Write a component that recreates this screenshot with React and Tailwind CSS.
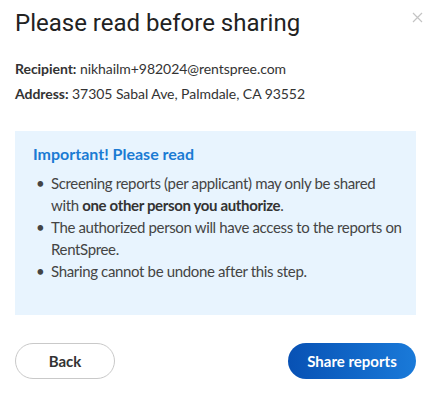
import React from 'react';

const bullets = [
  <>
    Screening reports (per applicant) may only be shared
    <br />
    with <b className="font-bold text-[#333]">one other person you authorize</b>.
  </>,
  <>The authorized person will have access to the reports on RentSpree.</>,
  <>Sharing cannot be undone after this step.</>
];

const CloseIcon = () => (
  <svg width="11" height="11" viewBox="0 0 11 11" fill="none" stroke="#c4c4c4" strokeWidth="1.2">
    <path d="M1 1 L10 10 M10 1 L1 10" />
  </svg>
);

const App = () => {
  return (
    <div className="w-[440px] h-[397px] bg-white relative font-['Lato',sans-serif] text-[#333]">
      <button className="absolute right-[17px] top-[12px] p-0">
        <CloseIcon />
      </button>
      <div className="pl-[15px] pr-[24px] pt-[5px]">
        <h1 className="font-['Roboto',sans-serif] text-[24px] leading-[36px] text-[#222] font-normal">
          Please read before sharing
        </h1>

        <div className="mt-[15px] text-[14px] leading-[25px] tracking-[-0.05px]">
          <p>
            <span className="font-bold">Recipient:</span> nikhailm+982024@rentspree.com
          </p>
          <p>
            <span className="font-bold">Address:</span> 37305 Sabal Ave, Palmdale, CA 93552
          </p>
        </div>

        <div className="mt-[25px] bg-[#e8f4fe] h-[184px] pl-[18px] pr-[4px] pt-[11px]">
          <h2 className="text-[#1b7bd3] font-bold text-[16px] leading-[24px]">Important! Please read</h2>
          <ul className="mt-[6px] text-[15px] leading-[22px] tracking-[-0.35px] text-[#444]">
            {bullets.map((item, i) => (
              <li key={i} className="flex">
                <span className="w-[18px] shrink-0 pl-[3px]">•</span>
                <span>{item}</span>
              </li>
            ))}
          </ul>
        </div>

        <div className="mt-[28px] flex items-center justify-between">
          <button className="w-[100px] h-[36px] rounded-full border border-[#c9c9c9] text-[15px] font-bold text-[#333]">
            Back
          </button>
          <button className="w-[128px] h-[36px] rounded-full bg-gradient-to-r from-[#0851b4] to-[#1a7ad9] text-white text-[15px] font-bold">
            Share reports
          </button>
        </div>
      </div>
    </div>
  );
};

export default App;
